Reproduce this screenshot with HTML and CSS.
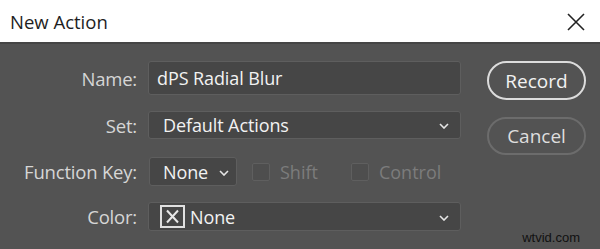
FILE: index.html
```html
<!DOCTYPE html>
<html>
<head>
<meta charset="utf-8">
<link rel="stylesheet" href="styles.css">
</head>
<body>
<div class="dialog">
  <div class="titlebar">
    <span class="title">New Action</span>
    <svg class="close" width="18" height="18" viewBox="0 0 18 18"><path d="M1 1L17 17M17 1L1 17" stroke="#222" stroke-width="1.6" fill="none"/></svg>
  </div>
  <div class="body">
    <div class="form">
      <div class="row row-name">
        <label class="label">Name:</label>
        <div class="field wide">dPS Radial Blur</div>
      </div>
      <div class="row row-set">
        <label class="label">Set:</label>
        <div class="field wide select">Default Actions
          <svg class="chev" width="10" height="6" viewBox="0 0 10 6"><path d="M1 1L5 5L9 1" stroke="#e6e6e6" stroke-width="1.6" fill="none"/></svg>
        </div>
      </div>
      <div class="row row-fk">
        <label class="label">Function Key:</label>
        <div class="fk-controls">
          <div class="field small select">None
            <svg class="chev" width="10" height="6" viewBox="0 0 10 6"><path d="M1 1L5 5L9 1" stroke="#e6e6e6" stroke-width="1.6" fill="none"/></svg>
          </div>
          <div class="check"><span class="box"></span><span class="ctext">Shift</span></div>
          <div class="check"><span class="box"></span><span class="ctext">Control</span></div>
        </div>
      </div>
      <div class="row row-color">
        <label class="label">Color:</label>
        <div class="field wide select color-field">
          <svg class="xbox" width="25" height="23" viewBox="0 0 25 23"><rect x="1" y="1" width="23" height="21" fill="none" stroke="#e0e0e0" stroke-width="2"/><path d="M7 5.5L18 17.5M18 5.5L7 17.5" stroke="#e8e8e8" stroke-width="2" fill="none"/></svg>
          <span>None</span>
          <svg class="chev" width="10" height="6" viewBox="0 0 10 6"><path d="M1 1L5 5L9 1" stroke="#e6e6e6" stroke-width="1.6" fill="none"/></svg>
        </div>
      </div>
    </div>
    <div class="buttons">
      <div class="btn primary">Record</div>
      <div class="btn secondary">Cancel</div>
    </div>
  </div>
  <div class="watermark">wtvid.com</div>
</div>
</body>
</html>
```
FILE: styles.css
```css
html, body {
  margin: 0;
  padding: 0;
}
body {
  width: 600px;
  height: 249px;
  overflow: hidden;
  font-family: "Open Sans", "Liberation Sans", sans-serif;
  background: #535353;
}
.dialog {
  position: relative;
  width: 600px;
  height: 249px;
  background: #535353;
}
.titlebar {
  height: 42px;
  background: #ffffff;
  border-bottom: 2px solid #454545;
  display: flex;
  align-items: center;
  justify-content: space-between;
  padding: 0 15px 0 10px;
}
.title {
  font-size: 18.5px;
  color: #1e1e1e;
}
.close {
  margin-top: 1px;
}
.body {
  display: flex;
  padding-top: 17px;
}
.form {
  display: flex;
  flex-direction: column;
}
.row {
  display: flex;
  align-items: center;
}
.label {
  width: 137px;
  text-align: right;
  font-size: 18.5px;
  letter-spacing: -0.2px;
  color: #d6d6d6;
  margin-right: 11px;
  flex-shrink: 0;
}
.field {
  box-sizing: border-box;
  background: #464646;
  border: 1px solid #5e5e5e;
  border-radius: 3px;
  color: #f2f2f2;
  font-size: 18px;
  letter-spacing: -0.1px;
  display: flex;
  align-items: center;
  padding-left: 8px;
}
.wide {
  width: 313px;
}
.row-name .field { height: 34px; }
.row-set { margin-top: 16px; }
.row-set .field { height: 28px; padding-left: 14px; }
.row-fk { margin-top: 18px; }
.row-color { margin-top: 16px; }
.row-color .field { height: 29px; padding-left: 11px; }
.select {
  position: relative;
}
.chev {
  position: absolute;
  right: 11px;
  top: 50%;
  margin-top: -2px;
}
.fk-controls {
  display: flex;
  align-items: center;
}
.small {
  width: 88px;
  height: 29px;
  padding-left: 13px;
  margin-left: 1px;
}
.small .chev {
  right: 7px;
}
.check {
  display: flex;
  align-items: center;
  margin-left: 15px;
}
.check + .check {
  margin-left: 33px;
}
.box {
  box-sizing: border-box;
  width: 18px;
  height: 18px;
  border: 1px solid #5f5f5f;
  background: #4e4e4e;
  border-radius: 2px;
}
.ctext {
  font-size: 18px;
  color: #7c7c7c;
  margin-left: 10px;
}
.color-field span {
  margin-left: 5px;
}
.buttons {
  display: flex;
  flex-direction: column;
  margin-left: 26px;
  gap: 17px;
}
.btn {
  box-sizing: border-box;
  width: 99px;
  height: 39px;
  border-radius: 20px;
  display: flex;
  align-items: center;
  justify-content: center;
  font-size: 19px;
}
.primary {
  border: 2px solid #dcdcdc;
  color: #f2f2f2;
}
.secondary {
  height: 38px;
  border: 2px solid #6c6c6c;
  color: #dedede;
}
.watermark {
  position: absolute;
  right: 20px;
  bottom: 4px;
  font-family: "Liberation Sans", sans-serif;
  font-size: 13px;
  color: #111;
}
```
